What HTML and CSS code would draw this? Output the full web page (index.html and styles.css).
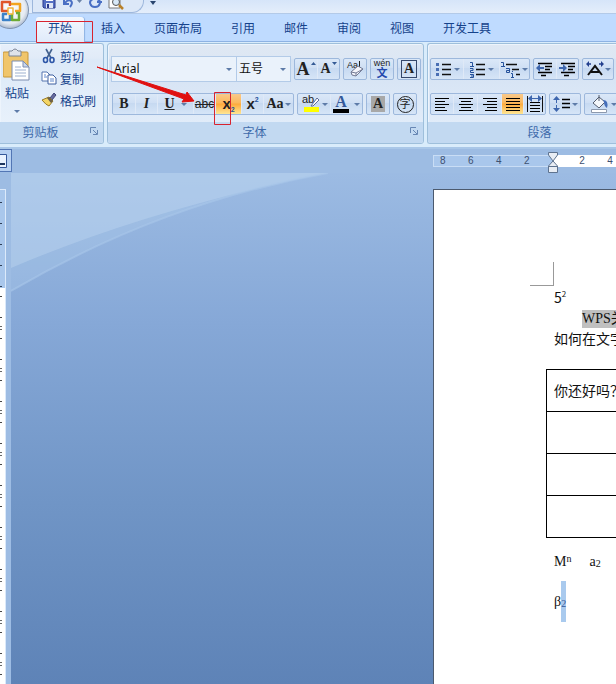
FILE: index.html
```html
<!DOCTYPE html>
<html lang="zh-CN">
<head>
<meta charset="utf-8">
<meta name="viewport" content="width=device-width, initial-scale=1">
<title>文档</title>
<link rel="stylesheet" href="styles.css">
</head>
<body>
<div class="app">
  <header class="titlebar">
    <button class="orb" aria-label="Office">
      <svg width="30" height="30" viewBox="0 0 30 30">
        <defs><radialGradient id="orb" cx=".5" cy=".45" r=".55"><stop offset="0" stop-color="#fff"/><stop offset=".75" stop-color="#e6ebf2"/><stop offset="1" stop-color="#a9b8cd"/></radialGradient></defs>
        <circle cx="10" cy="10" r="18.500" fill="url(#orb)" stroke="#7d91ae"/>
        <g fill="none" stroke-width="2.500" stroke-linejoin="round">
          <path d="M8 11H2V2H10V6" stroke="#e0562a"/>
          <path d="M12 5V4H20V11H15" stroke="#f2a41f"/>
          <path d="M7 14H3V20H10V15" stroke="#3c82c8"/>
          <path d="M16 13H19V20H12V14" stroke="#6cab35"/>
          <path d="M8 8H13V14H8Z" stroke="#f0b43c" stroke-width="1.500"/>
        </g>
      </svg>
    </button>
    <div class="quick">
      <button aria-label="保存"><svg width="16" height="14" viewBox="0 0 16 14"><path d="M2-3H14V8H3L2 7Z" fill="#5570c4" stroke="#2c3b8e"/><path d="M5-3H12V1H5Z" fill="#fff"/><path d="M5 3H12V8H5Z" fill="#dfe7f7"/><path d="M6 4H8V8H6Z" fill="#2c3b8e"/></svg></button>
      <button aria-label="撤消"><svg width="22" height="14" viewBox="0 0 22 14"><path d="M3-1V4H8M4 3C8-2 14 1 9 7" fill="none" stroke="#496fc4" stroke-width="2"/><path d="M16 0H21L18.500 3Z" fill="#6b83a8"/></svg></button>
      <button aria-label="恢复"><svg width="16" height="14" viewBox="0 0 16 14"><path d="M6-1C1 1 3 7 8 7S15 1 10-1M11-3V2H15" fill="none" stroke="#496fc4" stroke-width="2"/></svg></button>
      <button aria-label="打印预览"><svg width="18" height="14" viewBox="0 0 18 14"><path d="M2-3H13V8H2Z" fill="#fff" stroke="#777"/><circle cx="9" cy="2" r="3.500" fill="#d7e8f7" stroke="#555"/><path d="M12 5L16 9" stroke="#b98128" stroke-width="2.500"/></svg></button>
    </div>
    <button class="more" aria-label="自定义快速访问工具栏"><svg width="6" height="4"><path d="M0 0H6L3 4Z" fill="#29456f"/></svg></button>
  </header>

  <nav class="tabs">
    <a class="tab active" href="#home">开始</a>
    <a class="tab" href="#insert">插入</a>
    <a class="tab" href="#layout">页面布局</a>
    <a class="tab" href="#refs">引用</a>
    <a class="tab" href="#mail">邮件</a>
    <a class="tab" href="#review">审阅</a>
    <a class="tab" href="#view">视图</a>
    <a class="tab" href="#dev">开发工具</a>
  </nav>

  <section class="ribbon" id="home">
    <div class="group clipboard">
      <div class="body">
        <button class="paste">
          <svg width="28" height="34" viewBox="0 0 28 34"><rect x="0" y="4" width="25" height="25" rx="1" fill="#f0c56b" stroke="#c6963b"/><path d="M6 3H9Q12-1 15 3H18V8H6Z" fill="#dfe3ea" stroke="#7b8595"/><path d="M9 13H20L26 19V32H9Z" fill="#fff" stroke="#7c8db0"/><path d="M20 13V19H26Z" fill="#c9d7ee" stroke="#7c8db0"/><path d="M12 19H18M12 22H23M12 25H23M12 28H23" stroke="#9db0cf"/></svg>
          <span>粘贴</span>
          <i class="caret"></i>
        </button>
        <div class="commands">
          <button><svg width="16" height="16" viewBox="0 0 16 16"><path d="M5 1L10 10M11 1L6 10" stroke="#44628f" stroke-width="1.600"/><ellipse cx="4.500" cy="12" rx="2" ry="2.500" fill="none" stroke="#2e57a8" stroke-width="1.600"/><ellipse cx="11" cy="12" rx="2" ry="2.500" fill="none" stroke="#2e57a8" stroke-width="1.600"/></svg>剪切</button>
          <button><svg width="16" height="16" viewBox="0 0 16 16"><path d="M1 2H6L9 5V11H1Z" fill="#fff" stroke="#5574ae"/><path d="M7 5H12L15 8V14H7Z" fill="#fff" stroke="#3c5f9f"/><path d="M3 5H5M3 7H6M9 9H13M9 11H13" stroke="#5e87cb"/></svg>复制</button>
          <button><svg width="16" height="16" viewBox="0 0 16 16"><path d="M9 6L13 1L15 3L11 8Z" fill="#676c9d" stroke="#40477c"/><path d="M1 8L8 5L12 9L8 14Q5 13 1 8Z" fill="#f3d565" stroke="#9a7b27"/><path d="M8 5L12 9L10 11L6 6Z" fill="#6a604c"/></svg>格式刷</button>
        </div>
      </div>
      <footer><span>剪贴板</span><button class="launch" aria-label="剪贴板选项"><svg width="8" height="8"><path d="M.5 6V.5H6M3 3L7 7M7.500 3V7.500H3" fill="none" stroke="#6787b4"/></svg></button></footer>
    </div>

    <div class="group font">
      <div class="body">
        <div class="row top">
          <div class="combos">
            <span class="combo wide"><select aria-label="字体"><option>Arial</option></select><i class="caret"></i></span>
            <span class="combo"><select aria-label="字号"><option>五号</option></select><i class="caret"></i></span>
          </div>
          <div class="set"><button class="w22 serif big" aria-label="增大字体">A<svg class="tri" width="5" height="3"><path d="M0 3H5L2.500 0Z" fill="#345a95"/></svg></button><button class="w22 serif" aria-label="缩小字体">A<svg class="tri" width="5" height="3"><path d="M0 0H5L2.500 3Z" fill="#345a95"/></svg></button></div>
          <div class="set"><button class="w22" aria-label="清除格式"><svg width="20" height="20" viewBox="0 0 20 20"><text class="glyph tiny" x="2" y="9">Aa</text><path d="M14.500 2V9" stroke="#222"/><path d="M6 13L13 7L18 10L11 17L7 16Z" fill="#f4f4fa" stroke="#737a94"/><path d="M6 13L11 14V17M11 14L18 10" fill="none" stroke="#737a94"/></svg></button></div>
          <div class="set"><button class="w22 pinyin" aria-label="拼音指南"><span>wén</span><b>文</b></button></div>
          <div class="set"><button class="w22" aria-label="字符边框"><span class="boxed serif">A</span></button></div>
        </div>
        <div class="row">
          <div class="set">
            <button class="w22 serif" aria-label="加粗">B</button>
            <button class="w22 serif italic" aria-label="倾斜">I</button>
            <button class="w36 serif under" aria-label="下划线"><u>U</u><i class="caret"></i></button>
            <button class="w22 abc" aria-label="删除线"><s>abc</s></button>
            <button class="w26 on script" aria-label="下标">x<sub>2</sub></button>
            <button class="w22 script" aria-label="上标">x<sup>2</sup></button>
            <button class="w30 serif" aria-label="更改大小写">Aa<i class="caret"></i></button>
          </div>
          <div class="set">
            <button class="w32" aria-label="突出显示"><svg width="20" height="20" viewBox="0 0 20 20"><path d="M3 13H18V18H3Z" fill="#ff0"/><text class="glyph ab" x="1" y="9">ab</text><path d="M10 12L16 4L18 6L12 12Z" fill="#fff" stroke="#5e6d98"/></svg><i class="caret"></i></button>
            <button class="w32" aria-label="字体颜色"><span class="fontcolor serif">A</span><i class="caret"></i></button>
          </div>
          <div class="set"><button class="w22" aria-label="字符底纹"><span class="shade serif">A</span></button></div>
          <div class="set"><button class="w22" aria-label="带圈字符"><span class="circled">字</span></button></div>
        </div>
      </div>
      <footer><span>字体</span><button class="launch" aria-label="字体选项"><svg width="8" height="8"><path d="M.5 6V.5H6M3 3L7 7M7.500 3V7.500H3" fill="none" stroke="#6787b4"/></svg></button></footer>
    </div>

    <div class="group paragraph">
      <div class="body">
        <div class="row top">
          <div class="set">
            <button class="w32" aria-label="项目符号"><svg width="18" height="18"><path d="M7 4.500H16M7 9.500H16M7 14.500H16" stroke="#111" stroke-width="1.300"/><path d="M1 3H4V6H1ZM1 8H4V11H1ZM1 13H4V16H1Z" fill="#4a6fb4"/></svg><i class="caret"></i></button>
            <button class="w36" aria-label="编号"><svg width="18" height="18"><path d="M7 4.500H16M7 9.500H16M7 14.500H16" stroke="#111" stroke-width="1.300"/><path d="M1 2.500H3.500V6M1 6.500H5M1 8.500H4V10.500H1.500V12.500H5M1 14.500H4.500V17.500H1M2 16H4" fill="none" stroke="#24519b"/></svg><i class="caret"></i></button>
            <button class="w30" aria-label="多级列表"><svg width="20" height="18"><path d="M5 4.500H16M11 9.500H18M15 14.500H19" stroke="#111" stroke-width="1.300"/><path d="M0 2.500H2.500V6M0 6.500H4M5 8.500H8.500V12.500H5.500V10.500H8M11.500 11V12M10 13.500H11.500V17M10 17.500H13" fill="none" stroke="#24519b"/></svg><i class="caret"></i></button>
          </div>
          <div class="set">
            <button class="w22" aria-label="减少缩进量"><svg width="18" height="18"><path d="M2 3.500H16M9 6.500H16M9 9.500H14M2 12.500H16M5 15.500H10" stroke="#000" stroke-width="1.500"/><path d="M8 8H4" stroke="#3e66ad" stroke-width="2"/><path d="M0 8L4 4V12Z" fill="#3e66ad"/></svg></button>
            <button class="w22" aria-label="增加缩进量"><svg width="18" height="18"><path d="M2 3.500H16M9 6.500H16M9 9.500H14M2 12.500H16M5 15.500H10" stroke="#000" stroke-width="1.500"/><path d="M0 8H4" stroke="#3e66ad" stroke-width="2"/><path d="M8 8L4 4V12Z" fill="#3e66ad"/></svg></button>
          </div>
          <div class="set"><button class="w30" aria-label="中文版式"><svg width="18" height="18"><path d="M2 15L9 6L16 15M5 12H13" fill="none" stroke="#111" stroke-width="2"/><path d="M1 4H5M13 4H17" stroke="#233f8e" stroke-width="1.500"/><path d="M0 4L3 1V7ZM18 4L15 1V7Z" fill="#233f8e"/></svg><i class="caret"></i></button></div>
          <div class="set"><button class="w22" aria-label="排序"></button></div>
        </div>
        <div class="row">
          <div class="set">
            <button class="w22" aria-label="左对齐"><svg width="16" height="14"><path d="M1 1.500H15M1 4.500H11M1 7.500H15M1 10.500H11M1 13.500H13" stroke="#000"/></svg></button>
            <button class="w24" aria-label="居中"><svg width="16" height="14"><path d="M1 1.500H15M3 4.500H13M1 7.500H15M3 10.500H13M1 13.500H15" stroke="#000"/></svg></button>
            <button class="w24" aria-label="右对齐"><svg width="16" height="14"><path d="M1 1.500H15M5 4.500H15M1 7.500H15M5 10.500H15M3 13.500H15" stroke="#000"/></svg></button>
            <button class="w22 on" aria-label="两端对齐"><svg width="16" height="14"><path d="M1 1.500H15M1 4.500H15M1 7.500H15M1 10.500H15M1 13.500H15" stroke="#000"/></svg></button>
            <button class="w22" aria-label="分散对齐"><svg width="18" height="18"><path d="M1.500 1V17M16.500 1V17" stroke="#111"/><path d="M3 3.500H15" stroke="#3e66ad"/><path d="M2 3.500L6 0V7ZM16 3.500L12 0V7Z" fill="#3e66ad"/><path d="M4 7.500H14M4 10.500H14M4 13.500H14M4 16.500H14" stroke="#000"/></svg></button>
          </div>
          <div class="set"><button class="w30" aria-label="行距"><svg width="18" height="18"><path d="M3.500 3V15" stroke="#3e66ad" stroke-dasharray="5 2"/><path d="M0 5L3.500 1L7 5ZM0 13L3.500 17L7 13Z" fill="#3e66ad"/><path d="M9 4.500H17M9 8.500H17M9 12.500H17" stroke="#000" stroke-width="1.300"/></svg><i class="caret"></i></button></div>
          <div class="set"><button class="w36" aria-label="底纹"><svg width="20" height="18"><path d="M3 8L9 2L15 7L9 13Z" fill="#f4f7fb" stroke="#555e70"/><path d="M9 6V0" stroke="#555e70"/><path d="M13 5Q19 5 17 13Q14 11 14 7Z" fill="#456fba"/><path d="M1.500 14.500H16.500V17.500H1.500Z" fill="#fff" stroke="#8c99ad"/></svg><i class="caret"></i></button></div>
        </div>
      </div>
      <footer><span>段落</span></footer>
    </div>
  </section>

  <div class="rulerbar">
    <div class="corner"><svg width="8" height="14"><path d="M0 .5H6.500V13.500H0" fill="#eaf3ff" stroke="#34589a"/><path d="M0 10H5" stroke="#1c355f" stroke-width="2"/></svg></div>
    <div class="hruler">
      <div class="margin"><span>8</span><span>6</span><span>4</span><span>2</span></div>
      <div class="live"><span>2</span><span>4</span></div>
      <svg class="indent" width="10" height="22"><path d="M.5.500H9.500V3L5 9L9.500 14V20.500H.5V14L5 9L.5 3Z" fill="#e8edf4" stroke="#5e738f"/><path d="M.5 14.500H9.500" stroke="#5e738f"/></svg>
    </div>
  </div>

  <main class="workspace">
    <div class="vruler">
      <div class="vmargin"></div>
      <div class="vlive"></div>
    </div>
    <div class="canvas">
      <svg class="swoosh" width="320" height="120" viewBox="0 0 320 120"><path d="M0 0H317Q150 30 0 118Z" fill="#b4d0ee" fill-opacity=".3"/><path d="M0 0H317Q140 35 0 95Z" fill="#bdd5f0" fill-opacity=".45"/><path d="M317 0Q150 30 0 118" fill="none" stroke="#a9c7ea" stroke-width="2" stroke-opacity=".6"/></svg>
      <article class="page">
        <div class="cropmark"></div>
        <p class="sans">5<sup>2</sup></p>
        <p class="indented"><mark>WPS关</mark></p>
        <p>如何在文字</p>
        <table><tbody><tr><td>你还好吗？</td></tr><tr><td></td></tr><tr><td></td></tr><tr><td></td></tr></tbody></table>
        <p class="formula"><span>M<sup>n</sup></span><span>a<sub>2</sub></span></p>
        <p class="beta">β<span class="picked"><sub>2</sub></span></p>
      </article>
    </div>
  </main>

  <svg class="callout" width="240" height="130" viewBox="0 0 240 130"><g fill="none" stroke="#d8232f"><path d="M36.500 21.500H92.500V42.500H36.500ZM214.500 92.500H230.500V124.500H214.500Z"/></g><path d="M97 67L186 95L187 92L194 101L182 102L184 99Z" fill="#e01010" stroke="#e01010"/></svg>
</div>
</body>
</html>
```
FILE: styles.css
```css
* { box-sizing: border-box; }
body { margin: 0; font-family: "Liberation Sans", "Noto Sans CJK SC", sans-serif; font-size: 12px; color: #15428b; }
button { display: flex; align-items: center; justify-content: center; margin: 0; padding: 0; border: 0; background: none; color: inherit; font: inherit; }
svg { display: block; flex: none; }
p { margin: 0; }
.app { position: relative; display: flex; flex-direction: column; min-height: 100vh; overflow: hidden; background: #9fbde4; }

.titlebar { display: flex; height: 14px; background: linear-gradient(#d6e5f9, #e4eefb); border-bottom: 1px solid #b3cae8; }
.orb { position: absolute; left: 0; top: 0; z-index: 2; }
.quick { display: flex; gap: 4px; width: 112px; height: 13px; margin-left: 32px; padding-left: 8px; overflow: hidden; align-items: flex-start; border: 1px solid #9db7dc; border-top: 0; border-radius: 0 0 12px 0; background: #dce8f8; }
.more { height: 5px; margin-left: 6px; }

.tabs { display: flex; gap: 5px; height: 28px; padding-left: 36px; background: #bfdbff; border-bottom: 1px solid #8db2e3; }
.tab { padding: 0 12px; height: 25px; margin-top: 3px; line-height: 24px; color: #15428b; text-decoration: none; white-space: nowrap; }
.tab.active { background: linear-gradient(#f4f8fe, #dfeafa); border-radius: 3px 3px 0 0; box-shadow: 1px 0 1px #8db2e3; }

.ribbon { display: flex; gap: 3px; height: 107px; padding: 1px 0 3px; background: #d9ecfb; border-bottom: 2px solid #a9c7e8; }
.group { display: flex; flex-direction: column; flex: none; border: 1px solid #9ebfdb; border-radius: 3px; background: linear-gradient(#dfe8f3, #dde7f4 14px, #d3e1f3 16px, #e1ecf9 80px); box-shadow: inset 1px 1px 0 #edf4fc; overflow: hidden; }
.group .body { flex: 1; }
.group footer { display: flex; align-items: center; justify-content: center; position: relative; height: 21px; color: #3e6aaa; background: #c2d9f1; line-height: 24px; }
.launch { position: absolute; right: 5px; top: 5px; }
.clipboard { width: 104px; border-left: 0; border-radius: 0 3px 3px 0; background: linear-gradient(#e6effa, #e1ebf8 14px, #dce9f8 16px, #e8f1fb 80px); }
.clipboard footer, .font footer { padding-right: 22px; }
.clipboard .body { display: flex; gap: 7px; padding-top: 1px; }
.paste { flex-direction: column; justify-content: flex-start; width: 34px; padding-top: 3px; }
.paste span { line-height: 24px; }
.paste .caret { margin-top: 4px; }
.commands button { justify-content: flex-start; gap: 3px; height: 22px; white-space: nowrap; }
.font { width: 317px; }
.font .body { padding: 12px 3px 0; }
.paragraph .body { padding: 12px 2px 0; }
.paragraph { flex: 1 0 224px; border-right: 0; }
.row { display: flex; align-items: center; gap: 3px; height: 26px; }
.row.top { margin-bottom: 9px; }
.font .row { padding-left: 1px; }
.font .row.top { padding-left: 0; }

.caret { flex: none; width: 0; height: 0; border: 3px solid transparent; border-top-color: #5d7ba8; border-bottom: 0; }
.set { display: flex; flex: none; height: 22px; border: 1px solid #9db8dc; border-radius: 2px; background: linear-gradient(#dbe8f8, #cfdff4 45%, #c6d9f1 46%, #d6e5f7); color: #222; }
.set button { gap: 1px; height: 20px; border-left: 1px solid #dfe9f7; }
.set button:first-child { border-left: 0; }
.w22 { width: 22px; }
.w24 { width: 24px; }
.w26 { width: 26px; }
.w30 { width: 30px; }
.w32 { width: 32px; }
.w36 { width: 36px; }
.set .on { background: linear-gradient(#f8c98b, #fcb85c 45%, #fdaa3c 50%, #fee694); }
.set .serif { font: bold 14px/16px "Liberation Serif", serif; }
.set .big { font-size: 18px; }
.set .italic { font-style: italic; }
.set .under { gap: 6px; }
.set .abc { font-size: 12px; }
.set .script { gap: 0; font: bold 15px/16px "Liberation Sans", sans-serif; }
.script sub, .script sup { font-size: 7px; line-height: 8px; color: #24519b; }
.script sub { align-self: flex-end; }
.script sup { align-self: flex-start; padding-top: 2px; }
.tri { align-self: flex-start; margin-top: 3px; }
.set .pinyin { flex-direction: column; gap: 0; font-size: 9px; line-height: 8px; }
.pinyin b { font-size: 11px; line-height: 12px; color: #2449ad; }
.set .boxed { width: 16px; border: 1px solid #34476b; text-align: center; }
.set .fontcolor { width: 16px; border-bottom: 4px solid #000; color: #34589a; text-align: center; font-size: 16px; line-height: 14px; margin-right: 4px; }
.set .shade { width: 14px; background: #a8a8a8; text-align: center; }
.set .circled { width: 17px; height: 17px; border: 1px solid #222; border-radius: 50%; font-size: 11px; line-height: 15px; text-align: center; }
.glyph { font-family: "Liberation Sans", sans-serif; fill: #222; }
.tiny { font-size: 9px; }
.ab { font-size: 11px; }

.combos { display: flex; flex: none; width: 180px; height: 26px; background: #eaf2fb; border: 1px solid #b3cbe8; }
.combo { display: flex; align-items: center; flex: 1; padding-right: 4px; }
.combo.wide { flex: none; width: 125px; border-right: 1px solid #b3cbe8; }
.combo select { flex: 1; min-width: 0; padding: 0 2px; border: 0; appearance: none; background: none; color: #111; font: 12px/22px "Noto Sans", "Noto Sans CJK SC", sans-serif; }

.rulerbar { display: flex; height: 24px; background: #9dbce3; }
.corner { display: flex; align-items: center; flex: none; width: 12px; height: 23px; border: 1px solid #5276b5; border-left: 0; background: #b6d0f2; }
.hruler { position: relative; display: flex; flex: 1; height: 12px; margin: 6px 0 0 421px; font-size: 10px; line-height: 12px; color: #3d5070; }
.margin { display: flex; flex: none; width: 120px; padding-left: 2px; background: #a9c7ec; border: 1px solid #c9ddf5; line-height: 10px; }
.margin span { width: 28px; padding-left: 4px; }
.live { display: flex; flex: 1; padding-left: 15px; background: #fff; overflow: hidden; }
.live span { flex: none; width: 28px; text-align: center; }
.indent { position: absolute; left: 115px; top: -3px; }

.workspace { display: flex; flex: 1; }
.vruler { display: flex; flex-direction: column; flex: none; width: 11px; padding-top: 16px; border-right: 5px solid #9dbce3; background: #9dbce3; }
.vmargin { height: 99px; border: solid #dbe9fa; border-width: 1px 1px 0 0; background: repeating-linear-gradient(#2d3d55 0 1px, transparent 1px 21px) 0 12px / 2px 100% no-repeat #a9c7ec; }
.vlive { flex: 1; background: repeating-linear-gradient(#444 0 1px, transparent 1px 21px) 0 8px / 2px 100% no-repeat, repeating-linear-gradient(transparent 0 38px, #666 38px 39px, transparent 39px 41px, #666 41px 42px) 0 0 / 2px 100% no-repeat #fff; border-right: 1px solid #dbe9fa; }
.canvas { position: relative; display: flex; flex: 1; min-width: 0; padding: 16px 0 0 422px; background: linear-gradient(#9cbbe3, #86a8d7 150px, #7095c6 330px, #5e83b7); }
.swoosh { position: absolute; left: 0; top: 0; }
.page { flex: 1; min-width: 0; padding: 72px 0 0 120px; border: solid #4c5a6e; border-width: 1px 0 0 1px; background: #fff; overflow: hidden; color: #111; font: 14px/21px "Liberation Serif", "Noto Sans CJK SC", serif; white-space: nowrap; }
.cropmark { width: 24px; height: 24px; margin-left: -24px; border: solid #999; border-width: 0 1px 1px 0; }
.page sup, .page sub { font-size: 10px; line-height: 0; }
.page sup { vertical-align: 4px; }
.page sub { vertical-align: -1px; }
.sans { padding-top: 1px; font-family: "Noto Sans CJK SC", sans-serif; }
.page .sans sup { font-size: 8px; vertical-align: 6px; }
.indented { padding-left: 28px; }
mark { display: inline-block; height: 18px; line-height: 18px; background: #c0c0c0; color: #111; }
table { width: 400px; margin: 19px 0 0 -8px; border-collapse: collapse; }
td { height: 42px; padding: 2px 7px 0; border: 1px solid #000; }
.formula { display: flex; gap: 18px; margin-top: 13px; }
.beta { display: flex; margin-top: 9px; line-height: 41px; }
.picked { background: #a9caee; color: #34589a; }
.callout { position: absolute; left: 0; top: 0; z-index: 3; pointer-events: none; }
```
